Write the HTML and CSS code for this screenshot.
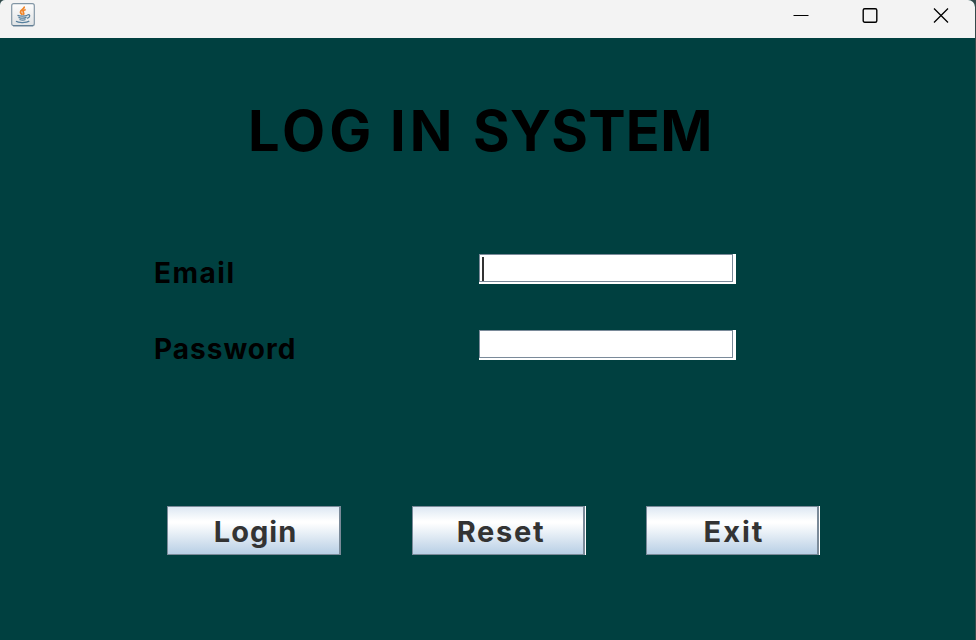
FILE: index.html
```html
<!DOCTYPE html>
<html lang="en">
<head>
<meta charset="utf-8">
<title>Login</title>
<link rel="stylesheet" href="styles.css">
</head>
<body>
<div class="window">
  <header class="titlebar">
    <svg class="app-icon" width="24" height="24" viewBox="0 0 24 24" fill="none">
      <defs><linearGradient id="tile" x1="0" y1="0" x2="0" y2="1"><stop offset="0" stop-color="#fdfdfd"/><stop offset="1" stop-color="#dfe2e4"/></linearGradient></defs>
      <rect x=".7" y=".7" width="22.6" height="22" rx="2" fill="url(#tile)" stroke="#8296a5" stroke-width="1.2"/>
      <path d="M2 22.8h20" stroke="#557590" stroke-width="1"/>
      <path d="M13.2 3.5c1 2.700-4.200 3.200-3.700 5.800.2 1 1.200 1.700 2 2.500M14.700 6.500c-2.600 1-3.200 1.900-2.200 3.200.6.9.2 1.500-.4 2" stroke="#f08428" stroke-width="1.800"/>
      <path d="M6.500 12.300c2 1 7.500 1 10 0M7.500 14.300c2.500 1 6 1 8 0M8.500 16.500c2 .8 4.500.8 6 0M16.500 11.600c3-.5 3 2.800-.4 3.700M5 18.300c2.500 1.800 10.500 1.600 13.300-.2" stroke="#557f9d" stroke-width="1.300"/>
    </svg>
    <div class="controls">
      <svg width="16" height="16" viewBox="0 0 16 16"><path d="M.5 8.500h15" stroke="#000"/></svg>
      <svg width="16" height="16" viewBox="0 0 16 16"><rect x="1.200" y="1.700" width="13.600" height="13.600" rx="1.500" fill="none" stroke="#000" stroke-width="1.400"/></svg>
      <svg width="16" height="16" viewBox="0 0 16 16"><path d="M1 1.500l14 14M15 1.500L1 15.500" stroke="#000" stroke-width="1.300"/></svg>
    </div>
  </header>
  <main class="content">
    <h1 class="title"><span class="word-log">LOG</span> <span class="word-in">IN</span> <span class="word-system">SYSTEM</span></h1>
    <form class="form">
      <label class="label email" for="email">Email</label>
      <div class="field"><input id="email" type="text"><span class="caret"></span></div>
      <label class="label password" for="password">Password</label>
      <div class="field"><input id="password" type="password"></div>
    </form>
    <div class="actions">
      <button class="button login" type="button">Login</button>
      <button class="button reset" type="button">Reset</button>
      <button class="button exit" type="button">Exit</button>
    </div>
  </main>
</div>
</body>
</html>
```
FILE: styles.css
```css
* { box-sizing: border-box; }

body {
  margin: 0;
  background: #34494a;
  font-family: Inter, "Liberation Sans", sans-serif;
  overflow: hidden;
}

.window {
  width: 975px;
  height: 640px;
  background: #004040;
  border-radius: 5px 7px 0 0;
  overflow: hidden;
}

.titlebar {
  height: 38px;
  padding: 3px 26px 0 11px;
  display: flex;
  justify-content: space-between;
  background: #f3f3f3;
}

.controls {
  display: flex;
  gap: 54px;
  padding-top: 4px;
}

.controls svg:last-child { margin-left: 1px; }
.controls svg:first-child { margin-right: -1px; }

.title {
  display: flex;
  gap: 18px;
  margin: 0;
  padding: 63px 0 0 248px;
  font-size: 56px;
  line-height: 60px;
  font-weight: 750;
  white-space: nowrap;
  color: #000;
}

.word-log { width: 124px; letter-spacing: 4px; }
.word-in { width: 63px; letter-spacing: 4px; }
.word-system { margin-left: 2px; letter-spacing: 0.300px; }

.form {
  margin: 93px 0 0 154px;
  display: grid;
  grid-template-columns: 325px 257px;
  row-gap: 46px;
}

.label {
  height: 30px;
  padding-top: 4px;
  font-size: 28px;
  line-height: 30px;
  font-weight: 650;
  letter-spacing: 1px;
  color: #000;
}

.email { letter-spacing: 1.500px; }

.field {
  position: relative;
  height: 30px;
  background: #fff;
}

.field input {
  display: block;
  width: 254px;
  height: 28px;
  padding: 0 4px;
  border: 1px solid #7a8a99;
  border-radius: 0;
  outline: none;
  background: #fff;
}

.caret {
  position: absolute;
  left: 3px;
  top: 3px;
  width: 2px;
  height: 24px;
  background: #333;
}

.actions {
  display: flex;
  margin: 146px 0 0 167px;
}

.button {
  width: 174px;
  height: 49px;
  padding: 2px 0 0 4px;
  border: 1px solid #7a8a99;
  border-right-width: 2px;
  border-radius: 0;
  background: linear-gradient(#dde8f3 0%, #fff 30%, #fff 34%, #b8cfe5 100%);
  font: 700 29px/32px Inter, "Liberation Sans", sans-serif;
  letter-spacing: 1px;
  color: #333;
}

.reset,
.exit {
  width: 173px;
  box-shadow: 1px 0 #fff;
}

.reset { margin-left: 71px; padding-left: 6px; letter-spacing: 1.700px; }
.exit { margin-left: 61px; padding-left: 4px; letter-spacing: 2px; }
```
